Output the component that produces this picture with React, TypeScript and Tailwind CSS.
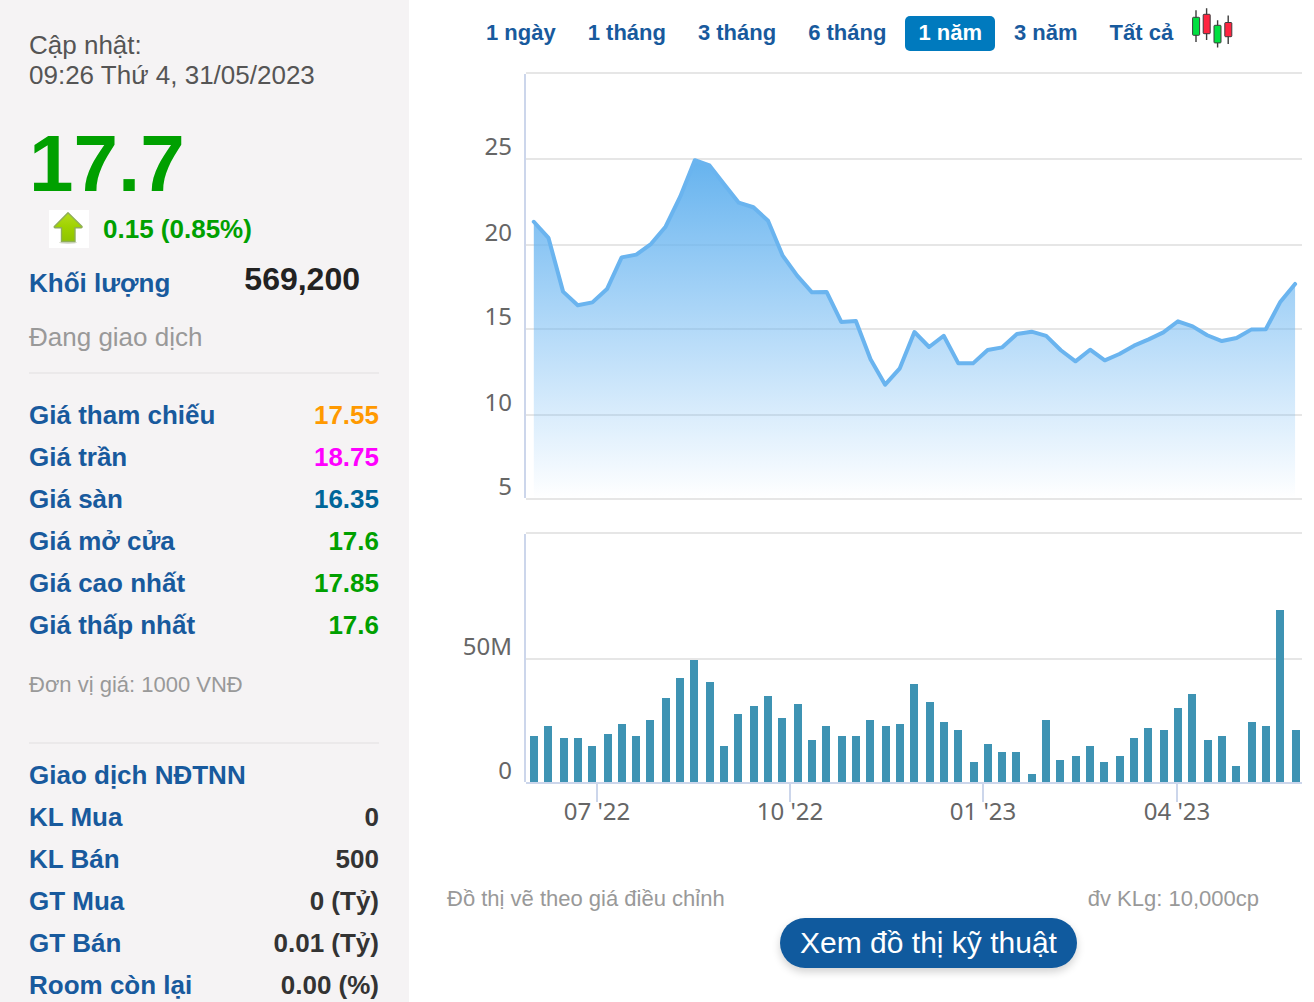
import React, { useState } from 'react';

const ranges = ['1 ngày', '1 tháng', '3 tháng', '6 tháng', '1 năm', '3 năm', 'Tất cả'];

const priceRows = [
  { label: 'Giá tham chiếu', value: '17.55', color: 'text-[#ff9900]' },
  { label: 'Giá trần', value: '18.75', color: 'text-[#ff00ff]' },
  { label: 'Giá sàn', value: '16.35', color: 'text-[#006699]' },
  { label: 'Giá mở cửa', value: '17.6', color: 'text-[#00a000]' },
  { label: 'Giá cao nhất', value: '17.85', color: 'text-[#00a000]' },
  { label: 'Giá thấp nhất', value: '17.6', color: 'text-[#00a000]' },
];

const foreignRows = [
  { label: 'KL Mua', value: '0', color: 'text-[#333333]' },
  { label: 'KL Bán', value: '500', color: 'text-[#333333]' },
  { label: 'GT Mua', value: '0 (Tỷ)', color: 'text-[#333333]' },
  { label: 'GT Bán', value: '0.01 (Tỷ)', color: 'text-[#333333]' },
  { label: 'Room còn lại', value: '0.00 (%)', color: 'text-[#333333]' },
];

// weekly close, 1000 VND
const prices = [
  21.27, 20.33, 17.17, 16.37, 16.54, 17.32, 19.18, 19.34, 19.96, 20.98, 22.74, 24.88, 24.58, 23.47,
  22.39, 22.12, 21.33, 19.28, 18.09, 17.13, 17.15, 15.39, 15.45, 13.2, 11.71, 12.67, 14.8, 13.92,
  14.58, 12.96, 12.96, 13.74, 13.9, 14.68, 14.82, 14.57, 13.73, 13.08, 13.76, 13.14, 13.51, 14,
  14.37, 14.78, 15.43, 15.13, 14.61, 14.27, 14.45, 14.94, 14.96, 16.58, 17.62,
];

// weekly volume, millions
const volumes = [
  18.5, 22.6, 17.7, 17.7, 14.5, 19.4, 23.4, 18.5, 25, 33.9, 41.9, 49.2, 40.3, 14.5, 27.4, 30.6,
  34.7, 25.8, 31.5, 16.9, 22.6, 18.5, 18.5, 25, 22.6, 23.4, 39.5, 32.3, 24.2, 21, 8.1, 15.3, 12.1,
  12.1, 3.2, 25, 8.9, 10.5, 14.5, 8.1, 10.5, 17.7, 21.8, 21, 29.8, 35.5, 16.9, 18.5, 6.5, 24.2,
  22.6, 69.4, 21,
];

const priceTicks = [
  { y: 22, label: '' },
  { y: 108, label: '25' },
  { y: 194, label: '20' },
  { y: 278, label: '15' },
  { y: 364, label: '10' },
  { y: 448, label: '5' },
];

const volumeTicks = [
  { y: 482, label: '' },
  { y: 608, label: '50M' },
  { y: 732, label: '0' },
];

const dateTicks = [
  { x: 71, label: "07 '22" },
  { x: 264, label: "10 '22" },
  { x: 457, label: "01 '23" },
  { x: 651, label: "04 '23" },
];

const PLOT_WIDTH = 776;
const STEP = 14.64;
const PRICE_BOTTOM = 448;
const VOLUME_BOTTOM = 731;

const snap = (v: number) => Math.round(v / 2) * 2;
const pointX = (i: number) => 7.8 + i * STEP;
const priceY = (v: number) => PRICE_BOTTOM - (v - 5) * 17.04;

const UpArrow: React.FC = () => (
  <svg viewBox="0 0 40 38" className="h-[38px] w-10" aria-hidden="true">
    <defs>
      <linearGradient id="arrow" x1="0" y1="0" x2="0" y2="1">
        <stop offset="0" stopColor="#b4dc1e" />
        <stop offset="0.5" stopColor="#9ed200" />
        <stop offset="1" stopColor="#8fc400" />
      </linearGradient>
    </defs>
    <rect width="40" height="38" fill="#ffffff" />
    <ellipse cx="19" cy="32.5" rx="9" ry="1.5" fill="#d8dcd0" />
    <path
      d="M19 2.8 L33 16.5 Q33.4 17.6 32 17.8 H26 V31.5 H12.5 V17.8 H6 Q4.8 17.4 5.4 16.5 Z"
      fill="url(#arrow)"
      stroke="#8fae58"
      strokeWidth="1.4"
      strokeLinejoin="round"
    />
  </svg>
);

const CandleIcon: React.FC = () => (
  <svg viewBox="0 0 41 40" className="h-10 w-[41px]" aria-hidden="true">
    <g stroke="#3c3c3c" strokeWidth="1.4">
      <path d="M4 2.3V34 M14.6 0.3V32 M25.6 12.3V39.5 M36.2 7.5V36" />
      <g strokeWidth="1">
        <rect x="0.6" y="9.3" width="7" height="18" rx="0.8" fill="#00e040" />
        <rect x="11.2" y="6.3" width="7" height="19.4" rx="0.8" fill="#ff2440" />
        <rect x="22" y="17.3" width="7" height="17.6" rx="0.8" fill="#00e040" />
        <rect x="32.8" y="14.5" width="7" height="14.2" rx="0.8" fill="#ff2440" />
      </g>
    </g>
  </svg>
);

const Rows: React.FC<{ rows: typeof priceRows }> = ({ rows }) => (
  <dl className="flex flex-col gap-3">
    {rows.map((row) => (
      <div key={row.label} className="flex justify-between">
        <dt className="text-[#185a9d]">{row.label}</dt>
        <dd className={row.color}>{row.value}</dd>
      </div>
    ))}
  </dl>
);

const Sidebar: React.FC = () => (
  <aside className="w-[409px] shrink-0 bg-[#f5f3f4] pl-[29px] pr-[30px] pt-[30px] text-[26px] leading-[30px]">
    <p className="text-[#555555]">
      Cập nhật:
      <br />
      09:26 Thứ 4, 31/05/2023
    </p>
    <p className="mt-[34px] text-[80px] font-bold leading-[80px] text-[#00a000]">17.7</p>
    <div className="ml-5 mt-1.5 flex items-center gap-[14px]">
      <UpArrow />
      <span className="font-bold text-[#00a000]">0.15 (0.85%)</span>
    </div>
    <div className="mt-[14px] flex items-start justify-between font-bold">
      <span className="leading-[42px] text-[#185a9d]">Khối lượng</span>
      <span className="mr-[19px] text-[32px] leading-[34px] text-[#222222]">569,200</span>
    </div>
    <p className="mt-[18px] text-[#999999]">Đang giao dịch</p>
    <hr className="mt-5 border-t-2 border-[#ebe9ea]" />
    <div className="mt-[26px] font-bold">
      <Rows rows={priceRows} />
    </div>
    <p className="mt-8 text-[22px] leading-[26px] text-[#999999]">Đơn vị giá: 1000 VNĐ</p>
    <hr className="mt-11 border-t-2 border-[#ebe9ea]" />
    <div className="mt-4 font-bold">
      <h2 className="mb-3 text-[#185a9d]">Giao dịch NĐTNN</h2>
      <Rows rows={foreignRows} />
    </div>
  </aside>
);

const Chart: React.FC = () => {
  const line = prices.map((p, i) => `${pointX(i)},${priceY(p)}`).join(' ');
  const lastX = pointX(prices.length - 1);

  return (
    <svg
      viewBox="0 0 905 784"
      className="block h-auto w-full"
      role="img"
      aria-label="Đồ thị giá và khối lượng"
    >
      <defs>
        <linearGradient id="area" x1="0" y1="0" x2="0" y2="1">
          <stop offset="0" stopColor="#66b3ee" />
          <stop offset="1" stopColor="#6ab6f5" stopOpacity="0" />
        </linearGradient>
      </defs>
      <g transform="translate(117 0)">
        {[...priceTicks, ...volumeTicks.slice(0, 2)].map((tick) => (
          <path key={tick.y} d={`M0 ${tick.y}H${PLOT_WIDTH}`} stroke="#e6e6e6" strokeWidth="2" />
        ))}
        <path
          d={`M-1 23V447M-1 483V731M0 732H${PLOT_WIDTH}`}
          stroke="#ccd6eb"
          strokeWidth="2"
        />

        <polygon
          points={`${pointX(0)},${PRICE_BOTTOM} ${line} ${lastX},${PRICE_BOTTOM}`}
          fill="url(#area)"
        />
        <polyline
          points={line}
          fill="none"
          stroke="#6ab4ef"
          strokeWidth="4"
          strokeLinejoin="round"
          strokeLinecap="round"
        />

        {volumes.map((v, i) => {
          const height = snap(v * 2.48);
          return (
            <rect
              key={i}
              x={snap(3.8 + i * STEP)}
              y={VOLUME_BOTTOM - height}
              width="8"
              height={height}
              fill="#3e93b3"
            />
          );
        })}

        <g className="font-['Noto_Sans',sans-serif] text-[24px]" fill="#666666">
          {[...priceTicks, ...volumeTicks].map((tick) => (
            <text key={tick.y} x="-14" y={tick.y - 4} textAnchor="end">
              {tick.label}
            </text>
          ))}
          {dateTicks.map((tick) => (
            <g key={tick.label}>
              <path d={`M${tick.x} 733V751`} stroke="#ccd6eb" strokeWidth="2" />
              <text x={tick.x} y="769" textAnchor="middle">
                {tick.label}
              </text>
            </g>
          ))}
        </g>
      </g>
    </svg>
  );
};

const App: React.FC = () => {
  const [active, setActive] = useState('1 năm');

  return (
    <div className="flex min-h-screen bg-white font-['Liberation_Sans',Arial,sans-serif]">
      <Sidebar />
      <main className="min-w-0 flex-1">
        <div className="flex items-start gap-1.5 pl-16 pt-2">
          {ranges.map((range) => (
            <button
              key={range}
              type="button"
              onClick={() => setActive(range)}
              className={`mt-2 h-[35px] whitespace-nowrap rounded-[5px] px-[13px] pb-0.5 text-[22px] font-bold leading-[33px] ${
                active === range ? 'bg-[#007abe] text-white' : 'text-[#185a9d]'
              }`}
            >
              {range}
            </button>
          ))}
          <button type="button" aria-label="Đồ thị nến">
            <CandleIcon />
          </button>
        </div>
        <Chart />
        <div className="mt-[51px] flex justify-between pl-[38px] pr-[55px] text-[22px] leading-[26px] text-[#999999]">
          <span>Đồ thị vẽ theo giá điều chỉnh</span>
          <span>đv KLg: 10,000cp</span>
        </div>
        <div className="mt-1.5 flex justify-center pl-[134px]">
          <a
            href="#do-thi-ky-thuat"
            className="rounded-full bg-[#105a9e] px-5 text-[30px] leading-[50px] text-white shadow-[0_4px_8px_rgba(0,0,0,0.18)]"
          >
            Xem đồ thị kỹ thuật
          </a>
        </div>
      </main>
    </div>
  );
};

export default App;
